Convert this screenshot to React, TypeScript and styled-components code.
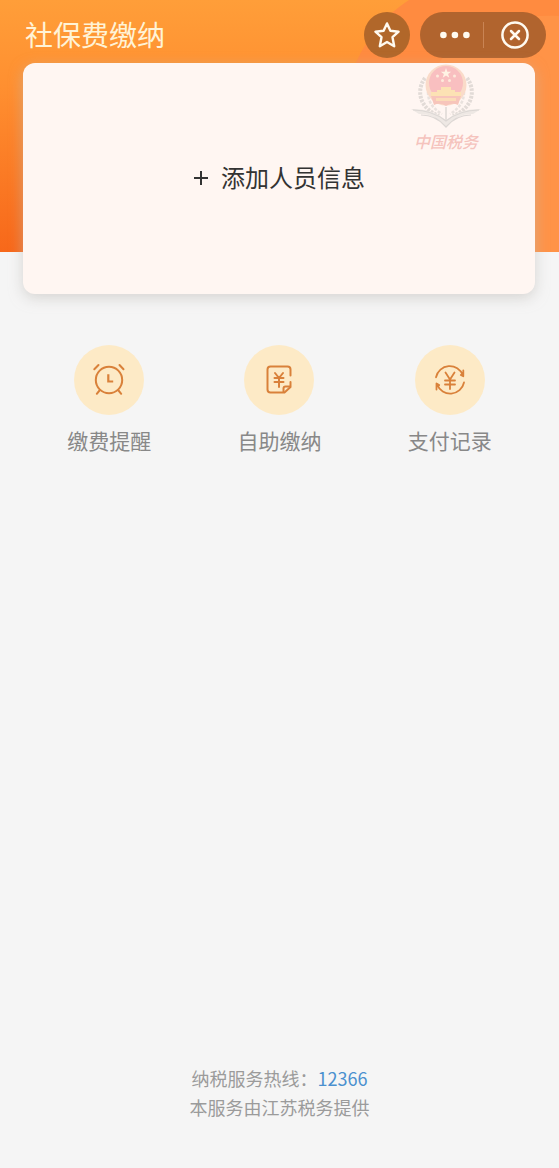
import React from "react";
import styled, { createGlobalStyle } from "styled-components";

const GlobalStyle = createGlobalStyle`
  * { box-sizing: border-box; }
  body {
    margin: 0;
    background: #f5f5f5;
    font-family: "Noto Sans CJK SC", "Noto Sans", sans-serif;
  }
  button { font: inherit; border: 0; padding: 0; background: none; cursor: pointer; }
`;

const Page = styled.div`
  min-height: 100vh;
  display: flex;
  flex-direction: column;
  position: relative;
  isolation: isolate;
`;

const Backdrop = styled.div`
  position: absolute;
  inset: 0 0 auto 0;
  height: 252px;
  z-index: -1;
  overflow: hidden;
  background: linear-gradient(180deg, #ff9e39 0%, #ff8f30 35%, #f7681a 100%);
`;

const Glow = styled.svg`
  position: absolute;
  top: 0;
  right: 0;
  width: 220px;
  height: 252px;
`;

const TopBar = styled.header`
  display: flex;
  align-items: flex-start;
  justify-content: space-between;
  padding: 12px 13px 5px 25px;
`;

const Title = styled.h1`
  margin: 0;
  font-size: 28px;
  line-height: 44px;
  font-weight: 400;
  color: #fff3d6;
`;

const Controls = styled.div`
  display: flex;
  gap: 10px;
`;

const RoundButton = styled.button`
  width: 46px;
  height: 46px;
  border-radius: 50%;
  display: grid;
  place-items: center;
  background: #b1672a;
`;

const Capsule = styled.div`
  display: flex;
  align-items: center;
  width: 126px;
  height: 46px;
  border-radius: 23px;
  background: #b1642e;
`;

const CapsuleButton = styled.button`
  flex: 1;
  height: 46px;
  display: grid;
  place-items: center;
`;

const Divider = styled.span`
  width: 1px;
  height: 26px;
  background: #c98454;
`;

const Card = styled.section`
  position: relative;
  margin: 0 24px 0 23px;
  height: 231px;
  border-radius: 12px;
  background: #fff6f2;
  box-shadow: 0 4px 14px rgba(190, 186, 182, 0.55);
  display: flex;
`;

const AddButton = styled.button`
  flex: 1;
  display: flex;
  align-items: center;
  justify-content: center;
  gap: 12px;
  padding: 0 0 4px;
  font-size: 24px;
  line-height: 36px;
  color: #333;
`;

const Emblem = styled.div`
  position: absolute;
  top: 0;
  right: 52px;
  width: 74px;
  display: flex;
  flex-direction: column;
  align-items: center;
  pointer-events: none;
`;

const EmblemName = styled.span`
  font-style: italic;
  font-weight: 500;
  font-size: 16px;
  line-height: 20px;
  color: #f5c3bd;
`;

const Services = styled.nav`
  display: grid;
  grid-template-columns: repeat(3, 1fr);
  padding: 51px 24px 0;
`;

const Service = styled.button`
  display: flex;
  flex-direction: column;
  align-items: center;
  gap: 9px;
  font-size: 21px;
  line-height: 32px;
  color: #888;
`;

const Disc = styled.span`
  width: 70px;
  height: 70px;
  border-radius: 50%;
  display: grid;
  place-items: center;
  background: #fdeac6;
`;

const Footer = styled.footer`
  margin-top: auto;
  padding-bottom: 46px;
  text-align: center;
  font-size: 18px;
  line-height: 29px;
  color: #9b9b9b;

  p { margin: 0; }
`;

const Hotline = styled.a`
  color: #4a90cf;
  text-decoration: none;
`;

const Line = styled.svg`
  display: block;
  fill: none;
  stroke: #d9813a;
  stroke-width: 2;
  stroke-linecap: round;
  stroke-linejoin: round;
`;

const StarIcon = () => (
  <svg width="28" height="28" viewBox="0 0 28 28" fill="none" stroke="#fffaf0" strokeWidth="2.4" strokeLinejoin="round">
    <path d="M14 2.4 17.4 9.7 25.6 10.7 19.5 16.2 21.2 25.2 14 21 6.8 25.2 8.5 16.2 2.4 10.7 10.6 9.7Z" />
  </svg>
);

const MoreIcon = () => (
  <svg width="38" height="8" viewBox="0 0 38 8" fill="#fffaf0">
    <circle cx="11.4" cy="4" r="3.3" />
    <circle cx="22.9" cy="4" r="3.3" />
    <circle cx="34.4" cy="4" r="3.3" />
  </svg>
);

const CloseIcon = () => (
  <svg width="28" height="28" viewBox="0 0 28 28" fill="none" stroke="#fffaf0" strokeWidth="2.5" strokeLinecap="round">
    <circle cx="14" cy="14" r="12.6" />
    <path d="M10 10 18 18M18 10 10 18" />
  </svg>
);

const PlusIcon = () => (
  <svg width="16" height="16" viewBox="0 0 16 16" fill="none" stroke="#333" strokeWidth="2">
    <path d="M1 9H15M8 2V16" />
  </svg>
);

const ClockIcon = () => (
  <Line width="34" height="34" viewBox="0 0 34 34">
    <circle cx="17" cy="17" r="13.2" />
    <path d="M16.3 11.2V18.5H21.2" strokeWidth="2.2" strokeLinecap="butt" strokeLinejoin="miter" />
    <path d="M2.3 6.2 6.5 2M27.5 2 31.5 6.2M7.5 27.5 4.8 30.8M26.5 27.5 29.2 30.8" />
  </Line>
);

const BillIcon = () => (
  <Line width="34" height="34" viewBox="0 0 34 34">
    <path d="M28.5 12.5V6.5Q28.5 3.5 25.5 3.5H8.5Q5.5 3.5 5.5 6.5V26.5Q5.5 29.5 8.5 29.5H22.5L28.5 24V19" />
    <path d="M21.5 29V25.5Q21.5 23.5 23.5 23.5H28" />
    <path d="M13 10 17 15 21 10M17 15V24M12.5 15H21.5M12.5 19H21.5" />
  </Line>
);

const RecordIcon = () => (
  <Line width="34" height="34" viewBox="0 0 34 34">
    <path d="M3 14.3A14 14 0 0 1 29.8 12.2M30.3 7.5V13.3L27.8 12" strokeWidth="1.8" />
    <path d="M31 19.5A14 14 0 0 1 4.2 21.6M3.5 26.5V20.5L6.2 22" strokeWidth="1.8" />
    <path d="M12.5 9.5 17 16.5 21.5 9.5M17 16.5V26M12 17.5H22M12 21.5H22" strokeWidth="1.8" />
  </Line>
);

const EmblemIcon = () => (
  <svg width="74" height="68" viewBox="0 0 74 68" fill="none">
    <g stroke="#e2dbd7" strokeWidth="4" strokeDasharray="2.6 1.2">
      <path d="M16 15C7 27 10 45 30 53" />
      <path d="M58 15C67 27 64 45 44 53" />
    </g>
    <g stroke="#e9e2de" strokeWidth="2.5" strokeDasharray="3 1.5">
      <path d="M19 29C19 38 23 45 33 51" />
      <path d="M55 29C55 38 51 45 41 51" />
    </g>
    <circle cx="37" cy="22" r="20.5" fill="#fadbc9" />
    <circle cx="37" cy="20" r="17" fill="#f9bfc0" />
    <path d="M37 5 38.3 8.7H42.2L39.1 11 40.3 14.7 37 12.4 33.7 14.7 34.9 11 31.8 8.7H35.7Z" fill="#fff3e4" />
    <g fill="#fdeadb">
      <circle cx="28.5" cy="13" r="1.5" />
      <circle cx="45.5" cy="13" r="1.5" />
      <circle cx="33.5" cy="17.5" r="1.5" />
      <circle cx="40.5" cy="17.5" r="1.5" />
    </g>
    <path d="M32 24H42V27H46V29H52V33H22V29H28V27H32Z" fill="#fce2b4" />
    <path d="M22 33H52L49 42Q43 39 37 43Q31 39 25 42Z" fill="#f7c5bb" />
    <path d="M27 35H47V38H27Z" fill="#fbdcb8" />
    <path d="M2 46Q22 45 37 57Q52 45 72 46L64 51Q49 50 37 64Q25 50 10 51Z" fill="#eee8e4" />
    <path d="M4 47Q23 47 37 58Q51 47 70 47M12 52Q27 52 37 64Q47 52 62 52" stroke="#dcd7d4" strokeWidth="1.2" />
    <path d="M37 44V57" stroke="#e6e0dc" strokeWidth="2" />
  </svg>
);

const services = [
  { label: "缴费提醒", Icon: ClockIcon },
  { label: "自助缴纳", Icon: BillIcon },
  { label: "支付记录", Icon: RecordIcon },
];

export default function App() {
  return (
    <Page>
      <GlobalStyle />
      <Backdrop>
        <Glow viewBox="0 0 220 252">
          <path d="M70 0C48 14 26 38 14 70V252H220V0Z" fill="#ff8b40" />
          <path d="M220 16C160 14 120 32 98 66V252H220Z" fill="#ff9347" />
        </Glow>
      </Backdrop>
      <TopBar>
        <Title>社保费缴纳</Title>
        <Controls>
          <RoundButton aria-label="收藏"><StarIcon /></RoundButton>
          <Capsule>
            <CapsuleButton aria-label="更多"><MoreIcon /></CapsuleButton>
            <Divider />
            <CapsuleButton aria-label="关闭"><CloseIcon /></CapsuleButton>
          </Capsule>
        </Controls>
      </TopBar>
      <Card>
        <AddButton>
          <PlusIcon />
          添加人员信息
        </AddButton>
        <Emblem>
          <EmblemIcon />
          <EmblemName>中国税务</EmblemName>
        </Emblem>
      </Card>
      <Services>
        {services.map(({ label, Icon }) => (
          <Service key={label}>
            <Disc><Icon /></Disc>
            {label}
          </Service>
        ))}
      </Services>
      <Footer>
        <p>纳税服务热线：<Hotline href="tel:12366">12366</Hotline></p>
        <p>本服务由江苏税务提供</p>
      </Footer>
    </Page>
  );
}
